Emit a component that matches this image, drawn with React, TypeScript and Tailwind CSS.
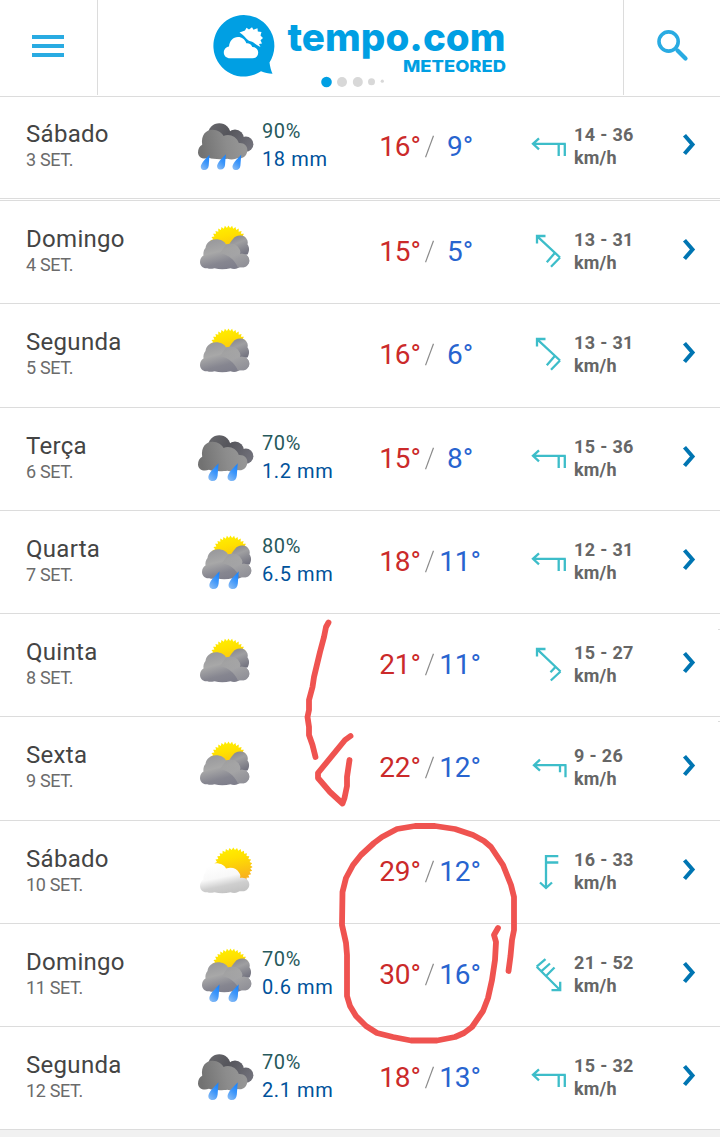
import React from 'react';
import clsx from 'clsx';

type Sky = 'rain3' | 'rain2' | 'cloudy' | 'sunrain' | 'sunny';
type Wind = 'w' | 'wShort' | 'nw' | 'nwShort' | 's' | 'se';

interface Day {
  name: string;
  date: string;
  sky: Sky;
  chance?: string;
  amount?: string;
  max: number;
  min: number;
  wind: Wind;
  speed: string;
}

const days: Day[] = [
  { name: 'Sábado', date: '3 SET.', sky: 'rain3', chance: '90%', amount: '18 mm', max: 16, min: 9, wind: 'w', speed: '14 - 36' },
  { name: 'Domingo', date: '4 SET.', sky: 'cloudy', max: 15, min: 5, wind: 'nw', speed: '13 - 31' },
  { name: 'Segunda', date: '5 SET.', sky: 'cloudy', max: 16, min: 6, wind: 'nw', speed: '13 - 31' },
  { name: 'Terça', date: '6 SET.', sky: 'rain2', chance: '70%', amount: '1.2 mm', max: 15, min: 8, wind: 'w', speed: '15 - 36' },
  { name: 'Quarta', date: '7 SET.', sky: 'sunrain', chance: '80%', amount: '6.5 mm', max: 18, min: 11, wind: 'w', speed: '12 - 31' },
  { name: 'Quinta', date: '8 SET.', sky: 'cloudy', max: 21, min: 11, wind: 'nwShort', speed: '15 - 27' },
  { name: 'Sexta', date: '9 SET.', sky: 'cloudy', max: 22, min: 12, wind: 'wShort', speed: '9 - 26' },
  { name: 'Sábado', date: '10 SET.', sky: 'sunny', max: 29, min: 12, wind: 's', speed: '16 - 33' },
  { name: 'Domingo', date: '11 SET.', sky: 'sunrain', chance: '70%', amount: '0.6 mm', max: 30, min: 16, wind: 'se', speed: '21 - 52' },
  { name: 'Segunda', date: '12 SET.', sky: 'rain2', chance: '70%', amount: '2.1 mm', max: 18, min: 13, wind: 'w', speed: '15 - 32' },
];

const windPaths: Record<Wind, string> = {
  w: 'M37.8 22.8H5M11 17.3L5 22.8L11 28.3M36.8 22.8V35M30.7 22.8V35',
  wShort: 'M38.5 23.2H6M12 17.7L6 23.2L12 28.7M37.5 23.2V35.3M32 23.2V30.3',
  nw: 'M32 31.5L9 10.2M17.5 10H9V17.5M32 31.5L23 40.7M26.8 27L18.8 36.3',
  nwShort: 'M32.5 32.5L9 10.2M17.5 10H9V17.5M32.5 32.5L22.8 41.5M27 28.5L22.5 33.3',
  s: 'M18 9V42M12 36.5L18 42L24 36.5M17 10.2H30.3M18 16.5H30.3',
  se: 'M8.7 17.7L32 41M23.5 41.2H32.2V32.8M8.7 17.7L17.5 10.2M13.2 22.3L22 14.5M18 27L26.5 18.5',
};

const sunTeeth = (cx: number, cy: number, outer: number, inner: number) => {
  const points: string[] = [];
  for (let i = 0; i < 64; i++) {
    const r = i % 2 ? inner : outer;
    const a = (i * Math.PI) / 32;
    points.push(`${(cx + r * Math.sin(a)).toFixed(2)},${(cy - r * Math.cos(a)).toFixed(2)}`);
  }
  return points.join(' ');
};

const Gradients = () => (
  <svg className="absolute h-0 w-0">
    <defs>
      <linearGradient id="sun" x1="0" y1="0" x2="0.2" y2="1">
        <stop offset="0" stopColor="#fff200" />
        <stop offset="0.35" stopColor="#ffe000" />
        <stop offset="1" stopColor="#f7a823" />
      </linearGradient>
      <linearGradient id="front" gradientUnits="userSpaceOnUse" x1="22" y1="20" x2="30" y2="52">
        <stop offset="0" stopColor="#98989b" />
        <stop offset="0.4" stopColor="#a8a8a8" />
        <stop offset="0.75" stopColor="#868690" />
        <stop offset="1" stopColor="#7e7e8b" />
      </linearGradient>
      <linearGradient id="bump" gradientUnits="userSpaceOnUse" x1="32" y1="26" x2="44" y2="50">
        <stop offset="0" stopColor="#9d9d9e" />
        <stop offset="0.5" stopColor="#aaaaaa" />
        <stop offset="1" stopColor="#97979c" />
      </linearGradient>
      <linearGradient id="back" gradientUnits="userSpaceOnUse" x1="40" y1="18" x2="48" y2="37">
        <stop offset="0" stopColor="#8a8a90" />
        <stop offset="0.35" stopColor="#9f9fa1" />
        <stop offset="1" stopColor="#72727f" />
      </linearGradient>
      <linearGradient id="white" gradientUnits="userSpaceOnUse" x1="24" y1="22" x2="30" y2="51">
        <stop offset="0" stopColor="#ffffff" />
        <stop offset="0.45" stopColor="#f8f8f8" />
        <stop offset="0.75" stopColor="#cfcfcf" />
        <stop offset="1" stopColor="#c4c4c4" />
      </linearGradient>
      <linearGradient id="storm" gradientUnits="userSpaceOnUse" x1="6" y1="40" x2="48" y2="32">
        <stop offset="0" stopColor="#727272" />
        <stop offset="0.6" stopColor="#8c8c8c" />
        <stop offset="1" stopColor="#969696" />
      </linearGradient>
      <linearGradient id="stormBack" gradientUnits="userSpaceOnUse" x1="16" y1="12" x2="54" y2="36">
        <stop offset="0" stopColor="#66666a" />
        <stop offset="0.4" stopColor="#55555b" />
        <stop offset="1" stopColor="#71717a" />
      </linearGradient>
      <linearGradient id="drop" x1="0.8" y1="0" x2="0.3" y2="1">
        <stop offset="0" stopColor="#1683ff" />
        <stop offset="0.5" stopColor="#3d96fa" />
        <stop offset="1" stopColor="#83b9f5" />
      </linearGradient>
    </defs>
  </svg>
);

const Drop = ({ x, y, scale = 1 }: { x: number; y: number; scale?: number }) => (
  <path
    transform={`translate(${x} ${y}) scale(${scale})`}
    fill="url(#drop)"
    d="M0 0C-1 1.5-7 6.5-9.3 11C-11.5 15 -9 17.8-6 17.8C-3 17.8-1.3 15.8-.9 12.5Z"
  />
);

const cloudPath =
  'M4 44C4 41 5.500 38.500 7.500 37.500C7 34.500 8 31.500 9.500 30C10 25 14.500 21.300 20 21.300C25 21.300 28.500 23.500 30 26.500C35 24.500 41 26 43.300 31C44.500 32.500 44.500 34.500 44 36C49.500 34.500 53.300 38.500 53.300 42.500C53.300 46.500 50 49.500 46.500 49.300C44 49 43 49 42 50C39.500 51.500 36.500 51.200 34.500 50.200C29.500 51.500 23.500 51.700 18.500 50.200C15 51 13 50.800 11.500 50.200C7.500 51 4 48 4 44Z';

const FrontCloud = ({ fill }: { fill: string }) => <path fill={fill} d={cloudPath} />;

const CloudySun = () => (
  <>
    <polygon points={sunTeeth(32.5, 26, 18.5, 16)} fill="url(#sun)" />
    <path
      fill="url(#back)"
      d="M33 27C34 24.500 35.500 22.500 37 21C39 17.500 45 16.500 49 19C51.500 21 52.300 24 51.500 26.500C53.500 29 53.700 33 51.500 36.500C48 37 40 37 37 34Z"
    />
    <FrontCloud fill="url(#front)" />
    <path
      fill="url(#bump)"
      fillOpacity="0.75"
      d="M30 26.500C35 24.500 41 26 43.300 31C44.500 32.500 44.500 34.500 44 36C49.500 34.500 53.300 38.500 53.300 42.500C53.300 46.500 50 49.500 46.500 49.300C44 49 43 49 42 50C40 44 34 37 24 35Z"
    />
  </>
);

const Storm = () => (
  <>
    <circle cx="23.300" cy="21.600" r="11.300" fill="url(#stormBack)" />
    <circle cx="39" cy="25.500" r="9" fill="url(#stormBack)" />
    <circle cx="49.800" cy="31.200" r="7.600" fill="url(#stormBack)" />
    <path
      fill="url(#storm)"
      d="M2 39.500C2 36 3.500 33 6.200 31.800C4.800 22 10 16.800 16.500 16.800C22 16.800 26 20 27.500 23C33 20.500 40.500 23 42.800 30C48 29.500 52 33 51.300 38C50.500 44 46 46 42 45C39 46.500 35 46.800 31.500 45.800C26 46.500 17 46.500 13 44.800C7.500 47 2 44.500 2 39.500Z"
    />
  </>
);

const SkyIcon = ({ sky }: { sky: Sky }) => (
  <svg className="h-[62px] w-[60px]" viewBox="0 0 60 62">
    {sky === 'cloudy' && <CloudySun />}
    {sky === 'sunrain' && (
      <>
        <g transform="translate(2 0)">
          <CloudySun />
        </g>
        <Drop x={23.5} y={43.2} />
        <Drop x={42.7} y={43.2} />
      </>
    )}
    {sky === 'sunny' && (
      <>
        <polygon points={sunTeeth(37.3, 28.9, 19.300, 17)} fill="url(#sun)" />
        <g transform="translate(0 4)">
          <FrontCloud fill="url(#white)" />
        </g>
      </>
    )}
    {sky === 'rain2' && (
      <>
        <Storm />
        <Drop x={22.5} y={38.3} />
        <Drop x={41.7} y={38.3} />
      </>
    )}
    {sky === 'rain3' && (
      <>
        <Storm />
        <Drop x={13.5} y={41.8} scale={0.86} />
        <Drop x={29.800} y={41.3} scale={0.86} />
        <Drop x={45.200} y={41.8} scale={0.86} />
      </>
    )}
  </svg>
);

const Header = () => (
  <header className="flex h-[97px] border-b border-[#dcdcdc]">
    <button className="mb-px flex w-[98px] flex-col gap-[5px] border-r border-[#dcdcdc] pl-8 pt-[35px]">
      <span className="h-1 w-8 bg-[#29abe2]" />
      <span className="h-1 w-8 bg-[#29abe2]" />
      <span className="h-1 w-8 bg-[#29abe2]" />
    </button>

    <div className="flex-1">
      <svg className="h-[92px] w-[525px]" viewBox="98 0 525 92">
        <path
          fill="#009fe3"
          d="M243.500 15A30.500 30.800 0 1 0 261 71.300C264.500 72.800 268.500 73.600 272.500 73.800C271 70.500 270 66.500 269.500 62.500A30.500 30.800 0 0 0 243.500 15Z"
        />
        <path
          fill="#fff"
          d="M230 58.300C226.500 58.300 223.800 55.800 223.800 52.500C223.800 49.500 226 47 229 46.500C229.500 41 233 37 238 37C242 37 245 39.500 246.300 43.200C249 42.800 251.500 44.500 252.300 47C256 47 258.200 49.500 258.200 52.500C258.200 55.800 256 58.300 252.500 58.300Z"
        />
        <path
          fill="#fff"
          d="M239.500 32.500L245 30.500L246.500 27.800L249 29.500L252 27.200L253.500 29.800L257.500 28.200L257.800 31.500L261.500 32L260.500 35.500L263 38L260.500 40.200L262 43.500L259 44L260.500 47C256 45 254.500 42.500 250.500 41.300C246 40 245 35.500 239.500 32.500Z"
        />
        <text
          x="287.500"
          y="51"
          textLength="218"
          lengthAdjust="spacingAndGlyphs"
          fill="#009fe3"
          className="font-['Inter'] text-[39px] font-extrabold"
        >
          tempo.com
        </text>
        <text
          x="403"
          y="71.500"
          textLength="103"
          lengthAdjust="spacingAndGlyphs"
          fill="#009fe3"
          className="font-['Inter'] text-[16.5px] font-extrabold"
        >
          METEORED
        </text>
        <circle cx="326.500" cy="82" r="5.300" fill="#009fe3" />
        <circle cx="342" cy="82" r="5" fill="#d8d8d8" />
        <circle cx="357.800" cy="82" r="5" fill="#d8d8d8" />
        <circle cx="371.500" cy="81.800" r="3.500" fill="#d8d8d8" />
        <circle cx="382.300" cy="81.200" r="1.600" fill="#d8d8d8" />
      </svg>
    </div>

    <button className="mb-px w-[97px] border-l border-[#dcdcdc] pl-[32px] pt-[28px]">
      <svg className="mb-auto h-[64px] w-9" viewBox="656 30 36 64" fill="none" stroke="#29abe2">
        <circle cx="668.600" cy="41.500" r="9.600" strokeWidth="3.600" />
        <path d="M677.500 50.500L685.500 58.500" strokeWidth="4.200" strokeLinecap="round" />
      </svg>
    </button>
  </header>
);

const DayRow = ({ day, first }: { day: Day; first: boolean }) => (
  <li
    className={clsx(
      'grid grid-cols-[170px_66px_113px_153px_46px_106px_1fr] items-start border-b border-[#dcdcdc] pl-[26px]',
      first ? 'h-[102px] pt-4' : 'h-[103.25px] pt-[17px]'
    )}
  >
    <div className="mt-[7px]">
      <p className="text-2xl leading-[28px] tracking-[0.3px] text-[#444]">{day.name}</p>
      <p className="text-lg leading-[24px] tracking-[-0.35px] text-[#6b6b6b]">{day.date}</p>
    </div>
    <SkyIcon sky={day.sky} />
    <div className="mt-1 text-xl leading-[28px] tracking-[0.6px]">
      <p className="text-[#27595c]">{day.chance}</p>
      <p className="text-[#00529b]">{day.amount}</p>
    </div>
    <div className="mt-[18px] flex text-[28px] leading-[32px] tracking-[-0.2px]">
      <span className="w-[50px] text-center text-[#cb2a2a]">{day.max}°</span>
      <svg className="h-8 w-[10px]" viewBox="0 0 10 32">
        <path d="M8.500 4.800L0.500 26.300" stroke="#8a8a8a" strokeWidth="1.200" />
      </svg>
      <span className="w-[50px] text-center text-[#2864cf]">{day.min}°</span>
    </div>
    <svg
      className="mt-2 h-11 w-11"
      viewBox="0 0 44 44"
      fill="none"
      stroke="#3dbdc9"
      strokeWidth="2.300"
    >
      <path d={windPaths[day.wind]} />
    </svg>
    <div className="mt-[10px] text-lg leading-[23px] font-bold tracking-[0.35px] text-[#666]">
      <p>{day.speed}</p>
      <p className="tracking-[0.2px]">km/h</p>
    </div>
    <svg className="mt-[19px] h-6 w-5" viewBox="0 0 20 24" fill="none" stroke="#0075b2" strokeWidth="4">
      <path d="M4.500 3.300L12.500 12.500L4.500 21.700" />
    </svg>
  </li>
);

// hand-drawn marks on top of the list
const Scribbles = () => (
  <svg
    className="pointer-events-none absolute left-0 top-0 h-[1137px] w-[720px]"
    viewBox="0 0 720 1137"
    fill="none"
    stroke="#ef5350"
    strokeWidth="5.800"
    strokeLinecap="round"
    strokeLinejoin="round"
  >
    <path d="M328.500 622.500L326 627L324 637L320 652L314 677L312.500 687L309 700V710L307.500 717L309 727V735L312.500 745L315.500 757" />
    <path d="M350.500 736L345 740L318 773V778L330 792L342.500 803.500L344.500 798L347 786V777L349.500 760" />
    <path d="M508.500 971L510.500 956L512 940L514 930V897L511 885L503 865L497 856L491 847L484 841L473 835L455 829L435 826H415L397 829L382 837L374 843L361 855L353 865L346 878L342.500 892L342 925L346 943L347 955V996L350 1006L356 1016L366 1026L377 1033L393 1037L411 1040.500H437L455 1037L464 1033L472 1027L483 1011L488 998L492 980L495 960L496 942L494 935L498 928" />
    <path d="M718 629.500H720M718 721.500H720" stroke="#dddddd" strokeWidth="1" strokeLinecap="butt" />
  </svg>
);

const App = () => {
  const [today, ...rest] = days;

  return (
    <div className="relative h-[1137px] w-[720px] overflow-hidden bg-white font-['Roboto',sans-serif]">
      <Gradients />
      <Header />
      <ul>
        <DayRow day={today} first />
      </ul>
      <ul className="mt-px border-t border-[#dcdcdc]">
        {rest.map((day) => (
          <DayRow key={day.date} day={day} first={false} />
        ))}
      </ul>
      <div className="h-[7px] bg-[#f1f1f1]" />
      <Scribbles />
    </div>
  );
};

export default App;
